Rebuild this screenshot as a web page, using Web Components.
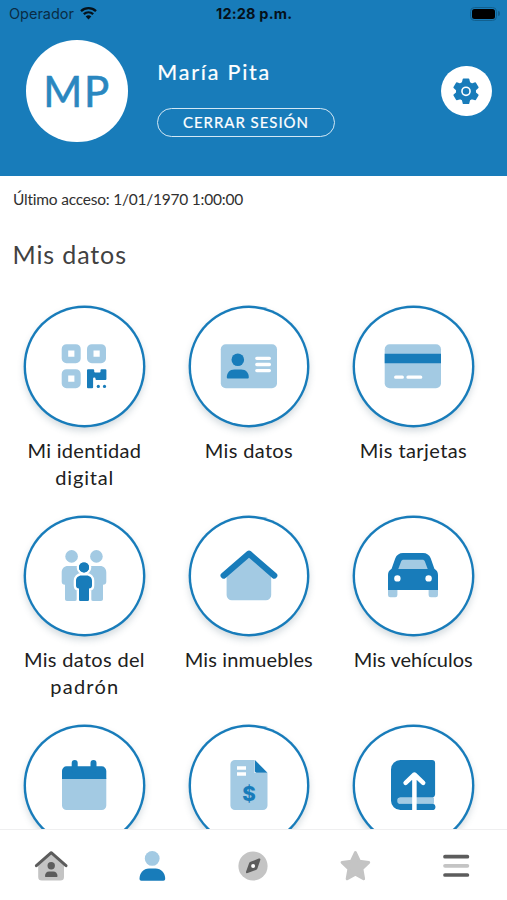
<!DOCTYPE html>
<html lang="es">
<head>
<meta charset="utf-8">
<title>Mis datos</title>
<style>
html,body{margin:0;height:100%;overflow:hidden;background:#fff}
</style>
</head>
<body>
<citizen-app></citizen-app>
<script>
const ICONS = {
  qr: `<g fill="#a3cae3" fill-rule="evenodd"><path id="q" d="M12.500 7.200h9.400a4.800 4.800 0 0 1 4.800 4.800v9.400a4.800 4.800 0 0 1-4.800 4.800h-9.400a4.800 4.800 0 0 1-4.800-4.800v-9.400a4.800 4.800 0 0 1 4.800-4.800zM14.200 13.600v6.200h6.200v-6.200z"/><use href="#q" x="25.300"/><use href="#q" y="25"/></g><path fill="#187cba" d="M34 32.300h5.200a1 1 0 0 1 1 1v1.200a1 1 0 0 0 1 1h4.300a1 1 0 0 0 1-1v-1.200a1 1 0 0 1 1-1h3.900a1 1 0 0 1 1 1v8.700a1 1 0 0 1-1 1h-8.900a1 1 0 0 1-1-1v-.4a1 1 0 0 0-1-1h-.4a1 1 0 0 0-1 1v8.700a1 1 0 0 1-1 1h-4.100a1 1 0 0 1-1-1v-17a1 1 0 0 1 1-1z"/><circle cx="44.300" cy="49.400" r="1.600" fill="#187cba"/><circle cx="50.500" cy="49.400" r="1.600" fill="#187cba"/>`,
  id: `<rect x="1.800" y="7.200" width="56.200" height="44" rx="5" fill="#a3cae3"/><g fill="#187cba"><circle cx="18.800" cy="22.800" r="6.300"/><path d="M15.500 32.500h6.600c5 0 7.700 3.500 7.700 7.700 0 .800-.5 1.300-1.300 1.300H9.100c-.8 0-1.300-.5-1.300-1.300 0-4.200 2.700-7.700 7.700-7.700z"/></g><path d="M37.800 21.300h12.600M37.800 27.500h12.600M37.800 33.600h12.600" stroke="#fff" stroke-width="3.300" stroke-linecap="round"/>`,
  card: `<rect x="1.700" y="7.200" width="56.300" height="44" rx="5" fill="#a3cae3"/><path d="M1.700 16.700h56.300v9.500h-56.300z" fill="#187cba"/><path d="M12.700 40.200h6.600M25 40.200h12.700" stroke="#fff" stroke-width="3.300" stroke-linecap="round"/>`,
  family: `<g fill="#a3cae3"><circle cx="17.600" cy="10.400" r="6.300"/><circle cx="42.400" cy="10.400" r="6.300"/><path d="M14 20h9c3 0 5 1.500 6 4l-3 10-3 19c0 1.200-.8 2-2 2h-8c-1.200 0-2-.8-2-2V38.700c-2 0-3.300-1.300-3.300-3V26.500c0-4 2.500-6.500 6.300-6.500z"/><path d="M46 20h-9c-3 0-5 1.500-6 4l3 10 3 19c0 1.200.8 2 2 2h8c1.200 0 2-.8 2-2V38.700c2 0 3.300-1.300 3.300-3V26.500c0-4-2.500-6.500-6.300-6.500z"/></g><g fill="#187cba" stroke="#fff" stroke-width="4.600" paint-order="stroke" stroke-linejoin="round"><circle cx="30" cy="21.400" r="5"/><path d="M27.500 29.400h5c3.300 0 5.500 2.300 5.500 5.300v4.800c0 1.800-1.200 3-3 3v11c0 1-.7 1.600-1.600 1.600h-6.800c-.9 0-1.600-.6-1.600-1.600v-11c-1.800 0-3-1.200-3-3v-4.800c0-3 2.200-5.300 5.500-5.300z"/></g><circle cx="30" cy="21.400" r="5" fill="#187cba"/><path d="M18 55.100h24v3H18z" fill="#fff"/>`,
  home: `<path d="M30 8 7.600 28v21a5.300 5.300 0 0 0 5.300 5.300h34a5.300 5.300 0 0 0 5.300-5.300V28z" fill="#a3cae3"/><path d="m4.600 29.600 25.400-22 25.300 22" fill="none" stroke="#187cba" stroke-width="6.100" stroke-linecap="round" stroke-linejoin="round"/>`,
  car: `<path d="M5 40h9.400v9a2.200 2.200 0 0 1-2.200 2.200h-5a2.200 2.200 0 0 1-2.200-2.200zM45.600 40h9.400v9a2.200 2.200 0 0 1-2.200 2.200h-5a2.200 2.200 0 0 1-2.200-2.200z" fill="#a3cae3"/><path d="M20 7h20c3.600 0 6.500 2 7.700 5.300l3.700 10.500c2.300 1.300 3.600 3.600 3.600 6.200v15H5V29c0-2.600 1.300-4.900 3.600-6.200l3.700-10.500C13.500 9 16.400 7 20 7z" fill="#187cba"/><path d="M20.700 13.700h18.600c1.300 0 2.200.6 2.600 1.700l2.800 7.700H15.300l2.800-7.700c.4-1.100 1.300-1.700 2.600-1.700z" fill="#a3cae3"/><g fill="#fff"><circle cx="14.400" cy="32.400" r="3.200"/><circle cx="45.600" cy="32.400" r="3.200"/></g>`,
  calendar: `<path d="M8 22h44.300v27.500a4.600 4.600 0 0 1-4.600 4.600H12.600A4.600 4.600 0 0 1 8 49.500z" fill="#a3cae3"/><path d="M12.600 10.300h35.100a4.600 4.600 0 0 1 4.600 4.600V23H8v-8.100a4.600 4.600 0 0 1 4.600-4.600z" fill="#187cba"/><path d="M20.700 7v7M39.500 7v7" stroke="#187cba" stroke-width="6" stroke-linecap="round"/>`,
  bill: `<path d="M16 4h19.500v13h13v32.500a4.600 4.600 0 0 1-4.600 4.600H16a4.600 4.600 0 0 1-4.600-4.600V8.600A4.600 4.600 0 0 1 16 4z" fill="#a3cae3"/><path d="M35.900 4 48.500 16.700H37.500a1.600 1.600 0 0 1-1.600-1.600z" fill="#187cba"/><path d="M18 12h9M18 18h9" stroke="#fff" stroke-width="3.300"/><text x="30" y="44.600" text-anchor="middle" font-family="Inter,sans-serif" font-weight="800" font-size="20.500" fill="#187cba">$</text>`,
  book: `<path d="M17 41.700h34v6.100H17a3 3 0 0 1 0-6.100z" fill="#a3cae3"/><path d="M17.400 4H49a3.100 3.100 0 0 1 3.100 3.100v31.500a3.100 3.100 0 0 1-2.100 2.900H17.400a3.100 3.100 0 0 0 0 6.300H50a3.200 3.200 0 0 1-1 6.300H17.400A9.400 9.400 0 0 1 8 44.700V13.400A9.400 9.400 0 0 1 17.400 4z" fill="#187cba"/><path d="M31.400 55V19M22.600 26.900l8.800-8.400 8.800 8.400" fill="none" stroke="#fff" stroke-width="4.500" stroke-linecap="round" stroke-linejoin="round"/>`,
  navhome: `<path d="M17 5 4.200 16v12a3.600 3.600 0 0 0 3.600 3.600h18.600A3.600 3.600 0 0 0 30 28V16z" fill="#c4c4c4"/><path d="M2.400 16.700 17.200 3.700 32 16.700" fill="none" stroke="#5c5c5c" stroke-width="2.900" stroke-linecap="round" stroke-linejoin="round"/><g fill="#5c5c5c"><circle cx="17.200" cy="16.700" r="3.700"/><path d="M15.200 22.400h4c2.600 0 4.300 2 4.300 4.600 0 .7-.4 1-1 1H12c-.7 0-1-.3-1-1 0-2.600 1.600-4.600 4.200-4.600z"/></g>`,
  user: `<circle cx="17.200" cy="9.400" r="7.400" fill="#a3cae3"/><path d="M14 19.400h6.600c5.500 0 9.600 4.600 9.600 10.400 0 1.200-.7 1.900-1.900 1.900H6.400c-1.200 0-1.900-.7-1.900-1.900 0-5.800 4-10.400 9.500-10.400z" fill="#187cba"/>`,
  compass: `<circle cx="17" cy="17" r="14.600" fill="#c4c4c4"/><path d="m22.800 9.600-8.200 3.200c-.8.300-1.300.8-1.600 1.600l-2.900 8.200c-.4 1.200.4 1.900 1.500 1.500l8.200-3.100c.8-.3 1.300-.8 1.600-1.600l2.900-8.300c.4-1.200-.4-1.900-1.500-1.500z" fill="#5c5c5c"/><circle cx="17.100" cy="16.900" r="2" fill="#fff"/>`,
  star: `<path d="m17.400 3.600 4 8.600 9.300 1.200-6.800 6.500 1.700 9.900-8.200-4.600-8.200 4.600 1.700-9.900-6.800-6.500 9.300-1.200z" fill="#c4c4c4" stroke="#c4c4c4" stroke-width="3" stroke-linejoin="round"/>`,
  menu: `<path d="M6 7.700h22.400M6 26h22.400" stroke="#5c5c5c" stroke-width="3.700" stroke-linecap="round"/><path d="M6 16.800h22.400" stroke="#c4c4c4" stroke-width="3.700" stroke-linecap="round"/>`,
  gear: `<path d="M14.300 4.500h5.400l.9 3.700 2.600 1.500 3.700-1.100 2.700 4.600-2.800 2.600v3l2.800 2.600-2.700 4.600-3.700-1.100-2.600 1.500-.9 3.700h-5.400l-.9-3.700-2.600-1.500-3.700 1.100-2.700-4.600 2.800-2.600v-3l-2.800-2.600 2.700-4.600 3.700 1.100 2.600-1.500z" fill="#187cba" stroke="#187cba" stroke-width="1.600" stroke-linejoin="round"/><circle cx="17" cy="17.300" r="4.300" fill="none" stroke="#fff" stroke-width="1.700"/>`,
  wifi: `<path d="M1.500 5.100a11 11 0 0 1 15 0M4.300 8.200a7.100 7.100 0 0 1 9.400 0" fill="none" stroke="#05111a" stroke-width="2.300"/><path d="M6.200 10.600a4.100 4.100 0 0 1 5.600 0L9 13.600z" fill="#05111a"/>`
};

/* Single line of text, tracked so that it spans the given width. */
customElements.define('fit-text', class extends HTMLElement {
  connectedCallback() {
    const root = this.attachShadow({mode: 'open'});
    root.innerHTML = `<style>:host{display:block;white-space:nowrap}span{display:inline-block}</style><span></span>`;
    const s = root.querySelector('span');
    s.textContent = this.getAttribute('text');
    const w = +this.getAttribute('w'), n = s.textContent.length;
    const gap = (w - s.getBoundingClientRect().width) / (n - 1);
    s.style.letterSpacing = gap + 'px';
    s.style.marginRight = -gap + 'px';
  }
});

customElements.define('app-icon', class extends HTMLElement {
  connectedCallback() {
    const box = this.getAttribute('box') || '0 0 60 60';
    this.attachShadow({mode: 'open'}).innerHTML =
      `<style>:host{display:block;flex:none}svg{display:block;width:100%;height:100%}</style><svg viewBox="${box}">${ICONS[this.getAttribute('name')]}</svg>`;
  }
});

customElements.define('status-bar', class extends HTMLElement {
  connectedCallback() {
    this.attachShadow({mode: 'open'}).innerHTML = `<style>
:host{display:grid;grid-template-columns:1fr auto 1fr;height:28px;align-items:center;padding:0 7px 0 9px;box-sizing:border-box;font:14.500px/20px Inter,sans-serif;color:#0a2c45}
.l{display:flex;align-items:center;gap:5px}app-icon{width:19px;height:15px;margin-top:-2px}
b{font-weight:700;color:#05111a;margin-left:-1px}
.r{display:flex;justify-content:flex-end;align-items:center;gap:1px;margin-top:-1px}
.bat{box-sizing:border-box;width:27px;height:14px;border:1.500px solid #12608f;border-radius:4.500px;padding:1px}
.bat i{display:block;height:100%;border-radius:2.500px;background:#000}
.tip{width:2px;height:5px;border-radius:0 2px 2px 0;background:#12608f}</style>
<div class="l"><fit-text text="Operador" w="65"></fit-text><app-icon name="wifi" box="0 0 18 15"></app-icon></div>
<b><fit-text text="12:28 p.m." w="76"></fit-text></b>
<div class="r"><div class="bat"><i></i></div><div class="tip"></div></div>`;
  }
});

customElements.define('profile-header', class extends HTMLElement {
  connectedCallback() {
    this.attachShadow({mode: 'open'}).innerHTML = `<style>
:host{display:block;height:176.400px;background:#187cba;color:#fff;flex:none}
.row{display:flex;align-items:flex-start;padding:12px 15.500px 0 26px}
.av{width:101.500px;height:101.500px;border-radius:50%;background:#fff;color:#2a87c0;display:flex;align-items:center;justify-content:center;font-size:42px;line-height:50px;-webkit-text-stroke:.6px #2a87c0}
.av fit-text{margin-left:-1px}
.who{margin-left:29px;padding-top:18px;flex:1}
.name{font-size:21.500px;line-height:28px;padding-left:.8px;-webkit-text-stroke:.2px #fff}
.btn{box-sizing:border-box;margin-top:21.500px;width:178px;height:29px;border:1.500px solid #d3e8f5;border-radius:15px;display:flex;align-items:center;justify-content:center;font-size:15px;line-height:20px;-webkit-text-stroke:.2px #fff}
.gear{margin-top:25.500px;width:50.500px;height:50.500px;border-radius:50%;background:#fff;display:flex;align-items:center;justify-content:center}
.gear app-icon{width:32px;height:32px;margin-right:1px}</style>
<status-bar></status-bar>
<div class="row"><div class="av"><fit-text text="MP" w="66"></fit-text></div>
<div class="who"><div class="name"><fit-text text="María Pita" w="112"></fit-text></div><div class="btn"><fit-text text="CERRAR SESIÓN" w="125"></fit-text></div></div>
<div class="gear"><app-icon name="gear" box="0 0 34 34"></app-icon></div></div>`;
  }
});

customElements.define('service-tile', class extends HTMLElement {
  connectedCallback() {
    const lines = this.getAttribute('label').split('|').map(l => {
      const [t, w] = l.split('=');
      return t ? `<fit-text text="${t}" w="${w}"></fit-text>` : '';
    }).join('');
    this.attachShadow({mode: 'open'}).innerHTML = `<style>
:host{display:flex;flex-direction:column;align-items:center;color:#202020;font-size:20px;line-height:27px}
.c{width:116.500px;height:116.500px;border-radius:50%;background:#fff;box-shadow:0 0 0 2.400px #187cba,0 4px 7px 2px rgba(60,90,110,.22);display:flex;align-items:center;justify-content:center;margin:2.500px 0 12px;flex:none}
app-icon{width:60px;height:60px}</style>
<div class="c"><app-icon name="${this.getAttribute('icon')}"></app-icon></div>${lines}`;
  }
});

customElements.define('tab-bar', class extends HTMLElement {
  connectedCallback() {
    this.attachShadow({mode: 'open'}).innerHTML = `<style>
:host{display:grid;grid-template-columns:repeat(5,1fr);justify-items:center;height:71.500px;flex:none;box-sizing:border-box;border-top:1.500px solid #efeff0;background:#fff;padding-top:19px;position:relative}
app-icon{width:34px;height:34px}</style>` +
      ['navhome', 'user', 'compass', 'star', 'menu'].map(n => `<app-icon name="${n}" box="0 0 34 34"></app-icon>`).join('');
  }
});

customElements.define('citizen-app', class extends HTMLElement {
  connectedCallback() {
    this.attachShadow({mode: 'open'}).innerHTML = `<style>
:host{display:flex;flex-direction:column;width:507px;height:900px;overflow:hidden;background:#fff;font-family:Lato,"Open Sans",sans-serif}
main{flex:1;min-height:0;overflow:hidden}
.last{font-size:15.500px;line-height:22px;color:#303030;padding:11.500px 0 0 13px}
h1{margin:0;font-weight:400;font-size:25px;line-height:32px;color:#414141;padding:28px 0 0 12.500px}
.grid{display:grid;grid-template-columns:repeat(3,164.500px);grid-auto-rows:209.500px;padding:36.100px 0 0 2px}</style>
<profile-header></profile-header>
<main><div class="last"><fit-text text="Último acceso: 1/01/1970 1:00:00" w="230.500"></fit-text></div>
<h1><fit-text text="Mis datos" w="113.500"></fit-text></h1>
<div class="grid">
<service-tile icon="qr" label="Mi identidad=114|digital=58"></service-tile>
<service-tile icon="id" label="Mis datos=88"></service-tile>
<service-tile icon="card" label="Mis tarjetas=107"></service-tile>
<service-tile icon="family" label="Mis datos del=120.500|padrón=68"></service-tile>
<service-tile icon="home" label="Mis inmuebles=128"></service-tile>
<service-tile icon="car" label="Mis vehículos=119"></service-tile>
<service-tile icon="calendar" label=""></service-tile>
<service-tile icon="bill" label=""></service-tile>
<service-tile icon="book" label=""></service-tile>
</div></main>
<tab-bar></tab-bar>`;
  }
});
</script>
</body>
</html>
